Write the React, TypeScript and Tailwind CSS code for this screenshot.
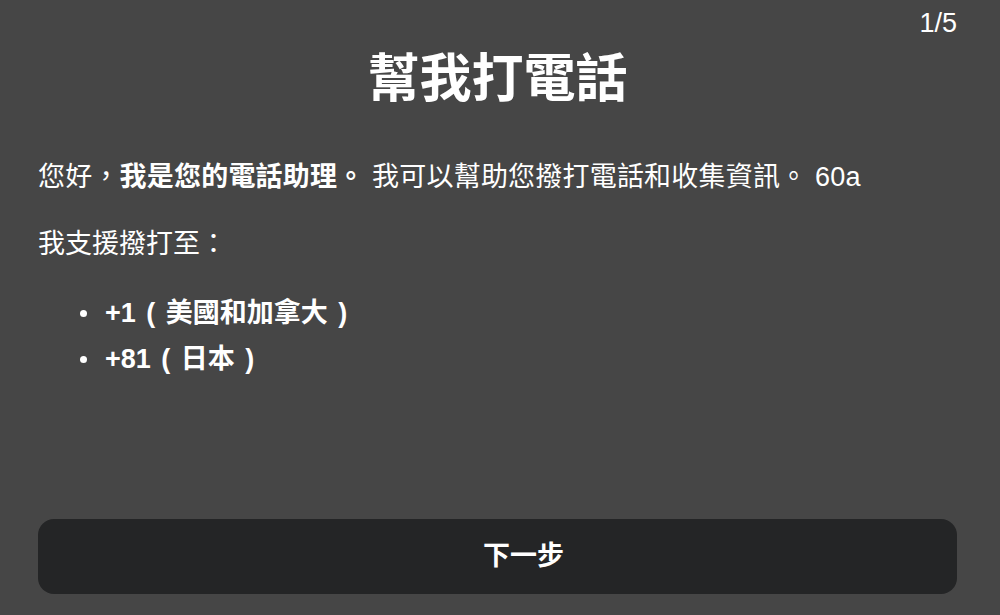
import * as React from "react";

const items = [
  { code: "+1", label: "美國和加拿大" },
  { code: "+81", label: "日本" },
];

function Paren({ children }: { children: React.ReactNode }) {
  return <span className="inline-block w-[30px] text-center">{children}</span>;
}

export default function App() {
  return (
    <div className="flex h-[615px] w-full flex-col bg-[#464646] pl-[38px] pr-[43px] font-['Liberation_Sans','Noto_Sans_CJK_TC',sans-serif] text-white">
      {/* Step counter */}
      <div className="pt-[9px] text-right text-[27px] leading-[28px]">1/5</div>

      <h1 className="mt-[12px] text-center text-[52px] font-bold leading-[60px]">
        幫我打電話
      </h1>

      <p className="mt-[45px] text-[27px] leading-[46px] tracking-[0.2px]">
        您好，<span className="font-bold">我是您的電話助理。</span> 我可以幫助您撥打電話和收集資訊。 60a
      </p>

      <p className="mt-[21px] text-[27px] leading-[46px]">我支援撥打至：</p>

      <ul className="mt-[23px]">
        {items.map((item) => (
          <li
            key={item.code}
            className="flex items-center text-[27px] font-bold leading-[46px]"
          >
            <span className="ml-[42px] mr-[18px] h-[7px] w-[7px] rounded-full bg-white" />
            <span>
              {item.code}
              <Paren>(</Paren>
              {item.label}
              <Paren>)</Paren>
            </span>
          </li>
        ))}
      </ul>

      <button className="mb-[21px] mt-auto flex h-[75px] w-full items-center justify-center rounded-[16px] bg-[#242526] pl-[52px] text-[27px] font-bold text-white">
        下一步
      </button>
    </div>
  );
}
